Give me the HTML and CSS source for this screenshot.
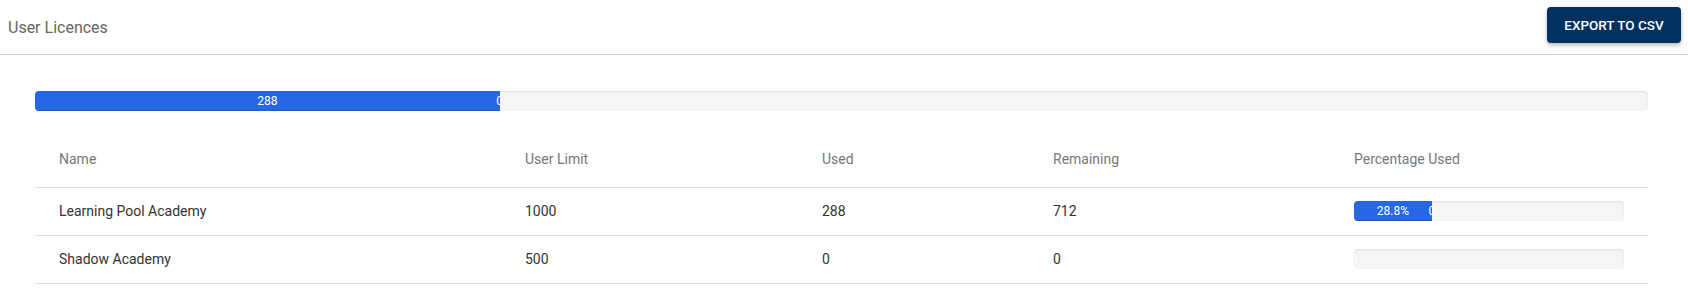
FILE: index.html
```html
<!DOCTYPE html>
<html lang="en">
<head>
  <meta charset="UTF-8" />
  <meta name="viewport" content="width=device-width, initial-scale=1.0"/>
  <title>User Licences</title>
  <link rel="stylesheet" href="styles.css">
</head>
<body>
  <div class="topbar">
    <div class="page-title">User Licences</div>
    <button class="btn-export">EXPORT TO CSV</button>
  </div>

  <div class="content">
    <div class="progress progress-total">
      <div class="progress-fill" style="width: 28.8%">288</div>
      <div class="progress-rest">0</div>
    </div>

    <table class="licences">
      <colgroup>
        <col style="width: 466px">
        <col style="width: 297px">
        <col style="width: 231px">
        <col style="width: 301px">
        <col>
      </colgroup>
      <thead>
        <tr>
          <th>Name</th>
          <th>User Limit</th>
          <th>Used</th>
          <th>Remaining</th>
          <th>Percentage Used</th>
        </tr>
      </thead>
      <tbody>
        <tr>
          <td>Learning Pool Academy</td>
          <td>1000</td>
          <td>288</td>
          <td>712</td>
          <td>
            <div class="progress">
              <div class="progress-fill" style="width: 28.8%">28.8%</div>
              <div class="progress-rest">0</div>
            </div>
          </td>
        </tr>
        <tr>
          <td>Shadow Academy</td>
          <td>500</td>
          <td>0</td>
          <td>0</td>
          <td>
            <div class="progress">
              <div class="progress-fill" style="width: 0%"></div>
              <div class="progress-rest">0</div>
            </div>
          </td>
        </tr>
      </tbody>
    </table>
  </div>
</body>
</html>
```

FILE: styles.css
```css
* {
  box-sizing: border-box;
}

body {
  margin: 0;
  font-family: Roboto, 'Liberation Sans', sans-serif;
  background: #fff;
  color: #333;
}

.topbar {
  height: 55px;
  padding: 7px 7px 0 8px;
  display: flex;
  justify-content: space-between;
  align-items: flex-start;
  border-bottom: 1px solid #cfcfcf;
}

.page-title {
  margin-top: 3px;
  font-size: 16px;
  color: #666;
  line-height: 36px;
}

.btn-export {
  width: 134px;
  height: 36px;
  border: none;
  border-radius: 4px;
  background: #01315f;
  color: #fff;
  font-family: Roboto, 'Liberation Sans', sans-serif;
  font-size: 13.5px;
  font-weight: 500;
  box-shadow: 0 2px 4px rgba(0, 0, 0, 0.3);
  cursor: pointer;
}

.content {
  padding: 36px 40px 0 35px;
}

.progress {
  display: flex;
  height: 20px;
  background: #f5f5f5;
  border-radius: 4px;
  overflow: hidden;
  box-shadow: inset 0 1px 2px rgba(0, 0, 0, 0.1);
}

.progress-fill {
  background: #2667e6;
  color: #fff;
  font-size: 12px;
  line-height: 20px;
  text-align: center;
  white-space: nowrap;
  box-shadow: inset 0 -1px 0 rgba(0, 0, 0, 0.15);
}

.progress-rest {
  width: 0;
  display: flex;
  justify-content: center;
  color: #fff;
  font-size: 12px;
  line-height: 20px;
}

.licences {
  width: 100%;
  margin-top: 20px;
  border-collapse: collapse;
  table-layout: fixed;
  font-size: 14px;
}

.licences th {
  height: 56px;
  padding: 0 24px;
  text-align: left;
  font-weight: 400;
  color: #777;
  border-bottom: 1px solid #ddd;
}

.licences td {
  height: 48px;
  padding: 0 24px;
  color: #333;
  border-bottom: 1px solid #ddd;
}
```
